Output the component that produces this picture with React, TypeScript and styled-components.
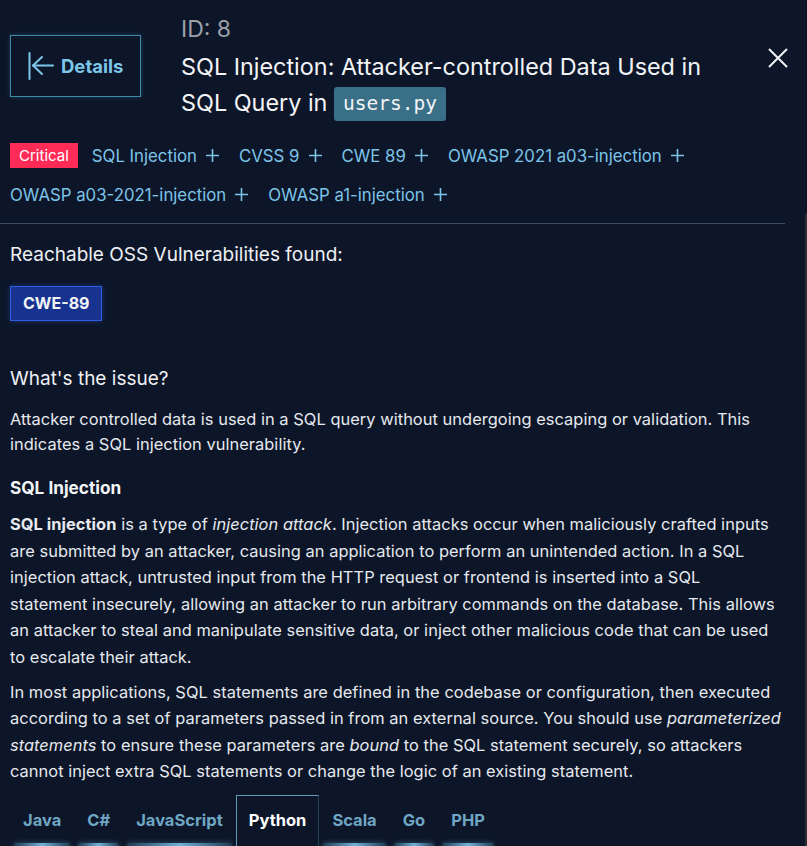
import React from "react";
import styled, { createGlobalStyle } from "styled-components";

const GlobalStyle = createGlobalStyle`
  html, body {
    margin: 0;
    padding: 0;
    background: #0d1629;
  }
  body {
    font-family: Inter, "Noto Sans", sans-serif;
    color: #e8ebf0;
  }
`;

const Page = styled.div`
  width: 807px;
  height: 846px;
  overflow: hidden;
  background: #0d1629;
  display: flex;
  flex-direction: column;
`;

const Header = styled.div`
  display: flex;
  align-items: flex-start;
  padding: 14px 19px 0 10px;
  gap: 40px;
`;

const BackButton = styled.button`
  margin-top: 21px;
  width: 131px;
  height: 62px;
  flex-shrink: 0;
  display: flex;
  align-items: center;
  gap: 7px;
  background: transparent;
  border: 1px solid #3f8aa6;
  box-shadow: 0 0 4px rgba(63, 138, 166, 0.35);
  color: #7cc6ea;
  font-family: Inter, sans-serif;
  font-weight: 700;
  font-size: 18.5px;
  padding: 0 0 0 17px;
`;

const TitleBlock = styled.div`
  flex: 1;
  display: flex;
  flex-direction: column;
`;

const IdLabel = styled.div`
  font-size: 23px;
  color: #9aa0a8;
  line-height: 30px;
`;

const Title = styled.h1`
  margin: 5px 0 0;
  font-size: 23.4px;
  font-weight: 400;
  line-height: 36px;
  color: #f3f4f6;
`;

const FileChip = styled.code`
  display: inline-block;
  background: #3a6f88;
  color: #f3f4f6;
  font-family: "DejaVu Sans Mono", monospace;
  font-size: 19.5px;
  line-height: 34px;
  padding: 0 9px;
  border-radius: 3px;
  vertical-align: 1px;
`;

const CloseButton = styled.button`
  margin-top: 34px;
  background: transparent;
  border: none;
  padding: 0;
  display: flex;
`;

const Tags = styled.div`
  display: flex;
  flex-wrap: wrap;
  row-gap: 14px;
  column-gap: 14px;
  padding: 22px 0 0 10px;
  width: 700px;
`;

const Severity = styled.span`
  background: #ff2b57;
  color: #fff;
  font-size: 15px;
  height: 25px;
  line-height: 25px;
  padding: 0 9px;
`;

const Tag = styled.span`
  display: inline-flex;
  align-items: center;
  gap: 9px;
  margin-right: 6px;
  color: #7cc4e8;
  font-size: 16.8px;
  height: 25px;
`;

const ScrollArea = styled.div`
  flex: 1;
  margin-top: 7px;
  padding: 9px 20px 0 10px;
  border-right: 2px solid #2a2d33;
  display: flex;
  flex-direction: column;
`;

const Divider = styled.div`
  margin-left: -10px;
  width: 785px;
  height: 1px;
  background: #3a4d63;
`;

const SectionTitle = styled.h2<{ $top: number }>`
  margin: ${({ $top }) => $top}px 0 0;
  font-size: 19px;
  font-weight: 400;
  line-height: 26px;
  color: #eef0f3;
`;

const CweChip = styled.span`
  align-self: flex-start;
  margin-top: 18px;
  height: 33px;
  line-height: 33px;
  padding: 0 12px;
  background: #17338f;
  border: 1px solid #2f5fe0;
  box-shadow: 0 0 5px rgba(47, 95, 224, 0.4);
  color: #f3f4f6;
  font-weight: 700;
  font-size: 16px;
`;

const Para = styled.p<{ $top?: number; $lh?: number }>`
  margin: ${({ $top }) => $top ?? 0}px 0 0;
  font-size: 16.4px;
  line-height: ${({ $lh }) => $lh ?? 26.6}px;
  letter-spacing: 0.05px;
  color: #e6e9ee;
`;

const Line = styled.span`
  display: block;
  white-space: nowrap;
`;

const SubHeading = styled.h3`
  margin: 18px 0 0;
  font-size: 17.2px;
  font-weight: 700;
  line-height: 26px;
  color: #f3f4f6;
`;

const Tabs = styled.div`
  display: flex;
  margin-top: 10px;
`;

const TabButton = styled.button<{ $active?: boolean }>`
  position: relative;
  height: 51px;
  padding: 12px 12px 0;
  display: flex;
  align-items: flex-start;
  background: transparent;
  font-family: Inter, sans-serif;
  font-weight: 700;
  font-size: 16.5px;
  line-height: 24px;
  color: ${({ $active }) => ($active ? "#ffffff" : "#6ea6c4")};
  border: 1px solid transparent;
  border-bottom: none;
  border-color: ${({ $active }) =>
    $active ? "#5e9bbb #243f55 transparent #5e9bbb" : "transparent"};
  &::after {
    content: "";
    display: ${({ $active }) => ($active ? "none" : "block")};
    position: absolute;
    left: 3px;
    right: 3px;
    bottom: 0;
    height: 3px;
    border-radius: 2px 2px 0 0;
    background: linear-gradient(90deg, #1d3a50, #6fb2d6 50%, #1d3a50);
    box-shadow: 0 0 5px rgba(111, 178, 214, 0.45);
  }
`;

const ArrowIcon = () => (
  <svg width="26" height="28" viewBox="0 0 26 28" fill="none" stroke="#7cc6ea" strokeWidth="2" strokeLinecap="round" strokeLinejoin="round">
    <path d="M1.5 1 V27" />
    <path d="M5 13.5 H25" />
    <path d="M14 5 L5 13.5 L14 22" />
  </svg>
);

const PlusIcon = () => (
  <svg width="13" height="13" viewBox="0 0 13 13" stroke="#7cc4e8" strokeWidth="1.6">
    <path d="M6.5 0 V13 M0 6.5 H13" />
  </svg>
);

const CloseIcon = () => (
  <svg width="20" height="20" viewBox="0 0 20 20" stroke="#f3f4f6" strokeWidth="2">
    <path d="M1 1 L19 19 M19 1 L1 19" />
  </svg>
);

const tags = [
  "SQL Injection",
  "CVSS 9",
  "CWE 89",
  "OWASP 2021 a03-injection",
  "OWASP a03-2021-injection",
  "OWASP a1-injection",
];

const languages = ["Java", "C#", "JavaScript", "Python", "Scala", "Go", "PHP"];

export default function App() {
  return (
    <>
      <GlobalStyle />
      <Page>
        <Header>
          <BackButton>
            <ArrowIcon />
            Details
          </BackButton>
          <TitleBlock>
            <IdLabel>ID: 8</IdLabel>
            <Title>
              SQL Injection: Attacker-controlled Data Used in SQL Query in{" "}
              <FileChip>users.py</FileChip>
            </Title>
          </TitleBlock>
          <CloseButton>
            <CloseIcon />
          </CloseButton>
        </Header>

        <Tags>
          <Severity>Critical</Severity>
          {tags.map((t) => (
            <Tag key={t}>
              {t}
              <PlusIcon />
            </Tag>
          ))}
        </Tags>

        <ScrollArea>
          <Divider />
          <SectionTitle $top={18}>Reachable OSS Vulnerabilities found:</SectionTitle>
          <CweChip>CWE-89</CweChip>

          <SectionTitle $top={45}>What's the issue?</SectionTitle>
          <Para $top={15} $lh={25}>
            <Line>
              Attacker controlled data is used in a SQL query without undergoing
              escaping or validation. This
            </Line>
            <Line>indicates a SQL injection vulnerability.</Line>
          </Para>
          <SubHeading>SQL Injection</SubHeading>
          <Para $top={10}>
            <Line>
              <b>SQL injection</b> is a type of <i>injection attack</i>. Injection
              attacks occur when maliciously crafted inputs
            </Line>
            <Line>
              are submitted by an attacker, causing an application to perform an
              unintended action. In a SQL
            </Line>
            <Line>
              injection attack, untrusted input from the HTTP request or frontend is
              inserted into a SQL
            </Line>
            <Line>
              statement insecurely, allowing an attacker to run arbitrary commands on
              the database. This allows
            </Line>
            <Line>
              an attacker to steal and manipulate sensitive data, or inject other
              malicious code that can be used
            </Line>
            <Line>to escalate their attack.</Line>
          </Para>
          <Para $top={8}>
            <Line>
              In most applications, SQL statements are defined in the codebase or
              configuration, then executed
            </Line>
            <Line>
              according to a set of parameters passed in from an external source.
              You should use <i>parameterized</i>
            </Line>
            <Line>
              <i>statements</i> to ensure these parameters are <i>bound</i> to the
              SQL statement securely, so attackers
            </Line>
            <Line>
              cannot inject extra SQL statements or change the logic of an existing
              statement.
            </Line>
          </Para>

          <Tabs>
            {languages.map((l) => (
              <TabButton key={l} $active={l === "Python"}>
                {l}
              </TabButton>
            ))}
          </Tabs>
        </ScrollArea>
      </Page>
    </>
  );
}
